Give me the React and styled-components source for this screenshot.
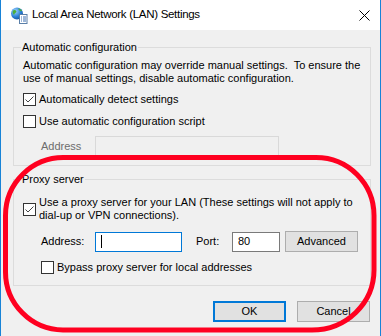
import React from 'react';
import styled, { createGlobalStyle } from 'styled-components';

const Global = createGlobalStyle`
  html, body {
    margin: 0;
    padding: 0;
    background: #ffffff;
  }
  body {
    font-family: "Liberation Sans", Arial, sans-serif;
    font-size: 11px;
    color: #000;
  }
`;

const Window = styled.div`
  position: relative;
  width: 381px;
  height: 336px;
  box-sizing: border-box;
  border-left: 1px solid #1883d7;
  border-right: 1px solid #1883d7;
  background: #f0f0f0;
  overflow: hidden;
  white-space: nowrap;
`;

const TitleBar = styled.div`
  height: 30px;
  background: #ffffff;
  display: flex;
  align-items: center;
  padding: 0 10px 0 9px;
`;

const Title = styled.div`
  flex: 1;
  margin-left: 4px;
  margin-top: -2px;
  font-size: 11.5px;
  letter-spacing: -0.3px;
  line-height: 16px;
  color: #000;
`;

const Body = styled.div`
  padding: 10px 0 0 12px;
`;

const Group = styled.fieldset`
  width: 358px;
  box-sizing: border-box;
  margin: ${p => (p.$first ? '0' : '6px 0 0 0')};
  padding: ${p => p.$pad};
  border: 1px solid #dcdcdc;
  min-width: 0;
`;

const Legend = styled.legend`
  padding: 0 1px;
  margin-left: -2px;
  line-height: 14px;
`;

const Note = styled.p`
  margin: 0;
  line-height: 13px;
`;

const CheckRow = styled.label`
  display: flex;
  align-items: center;
  margin-top: ${p => p.$top}px;
  margin-left: ${p => p.$indent || 0}px;
  line-height: 13px;
`;

const BoxFrame = styled.span`
  flex: none;
  width: 13px;
  height: 13px;
  box-sizing: border-box;
  border: 1px solid #333333;
  background: #ffffff;
  margin-right: 3px;
  display: flex;
  align-items: center;
  justify-content: center;
`;

const Field = styled.div`
  display: flex;
  align-items: center;
  margin-top: ${p => p.$top}px;
  margin-left: ${p => p.$indent}px;
`;

const FieldLabel = styled.span`
  flex: none;
  width: ${p => p.$w}px;
  margin-left: ${p => p.$gap || 0}px;
  color: ${p => (p.$disabled ? '#6d6d6d' : '#000')};
  line-height: 13px;
`;

const TextBox = styled.div`
  flex: none;
  width: ${p => p.$w}px;
  height: 20px;
  box-sizing: border-box;
  border: 1px solid ${p => p.$border};
  background: ${p => (p.$disabled ? '#f0f0f0' : '#ffffff')};
  display: flex;
  align-items: center;
  padding-left: 5px;
  line-height: 13px;
`;

const Caret = styled.span`
  width: 1px;
  height: 13px;
  background: #000;
`;

const Button = styled.div`
  flex: none;
  width: ${p => p.$w || 73}px;
  height: 21px;
  box-sizing: border-box;
  border: ${p => (p.$primary ? '2px solid #0078d7' : '1px solid #adadad')};
  background: #e1e1e1;
  display: flex;
  align-items: center;
  justify-content: center;
  margin-left: ${p => p.$gap || 0}px;
  line-height: 13px;
`;

const Footer = styled.div`
  width: 357px;
  display: flex;
  justify-content: flex-end;
  margin-top: 15px;
`;

const Annotation = styled.svg`
  position: absolute;
  left: 0;
  top: 0;
  pointer-events: none;
`;

const Check = ({ checked }) => (
  <BoxFrame>
    {checked && (
      <svg width="11" height="11" viewBox="0 0 11 11">
        <path d="M1.5 5.5 L4 8 L9.5 2.5" fill="none" stroke="#444" strokeWidth="1" />
      </svg>
    )}
  </BoxFrame>
);

const NetIcon = () => (
  <svg width="18" height="18" viewBox="0 0 18 18">
    <defs>
      <radialGradient id="globe" cx="0.35" cy="0.3" r="0.8">
        <stop offset="0" stopColor="#9fd3ff" />
        <stop offset="0.6" stopColor="#2a7fd4" />
        <stop offset="1" stopColor="#164f9a" />
      </radialGradient>
    </defs>
    <circle cx="7" cy="7.5" r="6" fill="url(#globe)" />
    <path d="M3 4.5 C4.5 3.5 6 4 6.5 5.5 C6 7 4.5 7 4 9 C3 8 2.2 6 3 4.5 Z" fill="#4caf3a" />
    <path d="M8 2.5 C10 2.5 11.5 3.5 12 5 C10.5 5.5 9 4.5 8 2.5 Z" fill="#4caf3a" />
    <rect x="9.5" y="8.5" width="7.5" height="9" fill="#ffffff" stroke="#5a7fa8" strokeWidth="1" />
    <path d="M11 11h1M13 11h3M11 13h1M13 13h3M11 15h1M13 15h3" stroke="#3d6fb0" strokeWidth="1" />
  </svg>
);

const CloseIcon = () => (
  <svg width="11" height="11" viewBox="0 0 11 11">
    <path d="M0.5 0.5 L10.5 10.5 M10.5 0.5 L0.5 10.5" stroke="#000" strokeWidth="1" />
  </svg>
);

export default function App() {
  return (
    <>
      <Global />
      <Window>
        <TitleBar>
          <NetIcon />
          <Title>Local Area Network (LAN) Settings</Title>
          <CloseIcon />
        </TitleBar>
        <Body>
          <Group $first $pad="5px 9px 9px 9px">
            <Legend>Automatic configuration</Legend>
            <Note>
              Automatic configuration may override manual settings.&nbsp; To ensure the
              <br />
              use of manual settings, disable automatic configuration.
            </Note>
            <CheckRow $top={8}>
              <Check checked />
              Automatically detect settings
            </CheckRow>
            <CheckRow $top={9}>
              <Check />
              Use automatic configuration script
            </CheckRow>
            <Field $top={8} $indent={18}>
              <FieldLabel $w={54} $disabled>Address</FieldLabel>
              <TextBox $w={184} $border="#d9d9d9" $disabled />
            </Field>
          </Group>
          <Group $pad="10px 9px 11px 9px">
            <Legend>Proxy server</Legend>
            <CheckRow $top={0}>
              <Check checked />
              <span>
                Use a proxy server for your LAN (These settings will not apply to
                <br />
                dial-up or VPN connections).
              </span>
            </CheckRow>
            <Field $top={9} $indent={18}>
              <FieldLabel $w={54}>Address:</FieldLabel>
              <TextBox $w={87} $border="#0078d7">
                <Caret />
              </TextBox>
              <FieldLabel $w={36} $gap={14}>Port:</FieldLabel>
              <TextBox $w={48} $border="#7a7a7a">80</TextBox>
              <Button $w={73} $gap={5}>Advanced</Button>
            </Field>
            <CheckRow $top={9} $indent={18}>
              <Check />
              Bypass proxy server for local addresses
            </CheckRow>
          </Group>
          <Footer>
            <Button $primary>OK</Button>
            <Button $gap={11}>Cancel</Button>
          </Footer>
        </Body>
        <Annotation width="381" height="336" viewBox="0 0 381 336">
          <path
            d="M64 157.5 H315 A58 58 0 0 1 373 215.5 V270 A62 60 0 0 1 311 330 H62 A58 58 0 0 1 4.5 272 V215.5 A58 58 0 0 1 64 157.5 Z"
            fill="none"
            stroke="#ff0020"
            strokeWidth="5"
          />
        </Annotation>
      </Window>
    </>
  );
}
